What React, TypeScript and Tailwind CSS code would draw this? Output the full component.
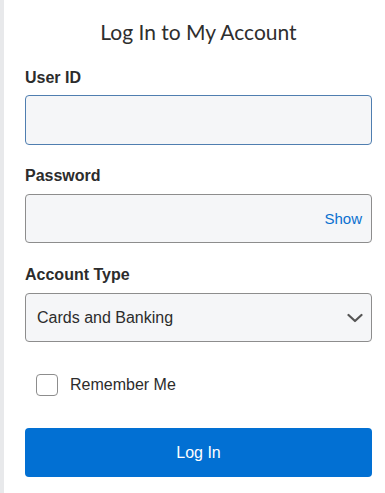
import { useState } from "react";

export default function App() {
  const [showPw, setShowPw] = useState(false);
  const [remember, setRemember] = useState(false);

  return (
    <div className="min-h-[493px] w-[385px] bg-white border-l-4 border-[#e8e9eb] pl-[21px] pr-[13px] font-['Liberation_Sans',Arial,sans-serif] text-[#2c2c2c]">
      <h1 className="pt-[17px] h-[66px] text-center font-['Lato',sans-serif] text-[21px] font-normal leading-[30px] text-[#2e2e2e]">
        Log In to My Account
      </h1>

      <form className="flex flex-col" onSubmit={e => e.preventDefault()}>
        {/* User ID */}
        <label className="text-base font-bold leading-6">User ID</label>
        <input
          type="text"
          className="mt-[5px] h-[50px] w-full rounded border border-[#4f7eb0] bg-[#f5f6f8] px-3 text-base outline-none"
        />

        {/* Password */}
        <label className="mt-[19px] text-base font-bold leading-6">Password</label>
        <div className="relative mt-[6px]">
          <input
            type={showPw ? "text" : "password"}
            className="h-[49px] w-full rounded border border-[#8d8d8d] bg-[#f5f6f8] pl-3 pr-16 text-base outline-none"
          />
          <button
            type="button"
            onClick={() => setShowPw(!showPw)}
            className="absolute right-[10px] top-1/2 -translate-y-1/2 text-[15px] text-[#0b71d0]"
          >
            {showPw ? "Hide" : "Show"}
          </button>
        </div>

        {/* Account Type */}
        <label className="mt-[20px] text-base font-bold leading-6">Account Type</label>
        <div className="relative mt-[6px]">
          <select className="h-[49px] w-full appearance-none rounded border border-[#8d8d8d] bg-[#f5f6f8] pl-[11px] pr-10 text-base text-[#2c2c2c] outline-none">
            <option>Cards and Banking</option>
            <option>Investing</option>
          </select>
          <svg
            className="pointer-events-none absolute right-[9px] top-1/2 -translate-y-1/2"
            width="16"
            height="10"
            viewBox="0 0 16 10"
            fill="none"
          >
            <path d="M1.5 2 L8 8 L14.5 2" stroke="#555" strokeWidth="2.2" strokeLinecap="round" strokeLinejoin="round" />
          </svg>
        </div>

        {/* Remember */}
        <label className="mt-[31px] ml-[11px] flex items-center gap-3 text-base text-[#2c2c2c]">
          <input
            type="checkbox"
            checked={remember}
            onChange={e => setRemember(e.target.checked)}
            className="h-[22px] w-[22px] appearance-none rounded-[4px] border border-[#8d8d8d] bg-white checked:bg-[#0b71d0]"
          />
          Remember Me
        </label>

        <button
          type="submit"
          className="mt-[31px] h-[49px] w-full rounded bg-[#0270d3] text-base text-white"
        >
          Log In
        </button>
      </form>
    </div>
  );
}
